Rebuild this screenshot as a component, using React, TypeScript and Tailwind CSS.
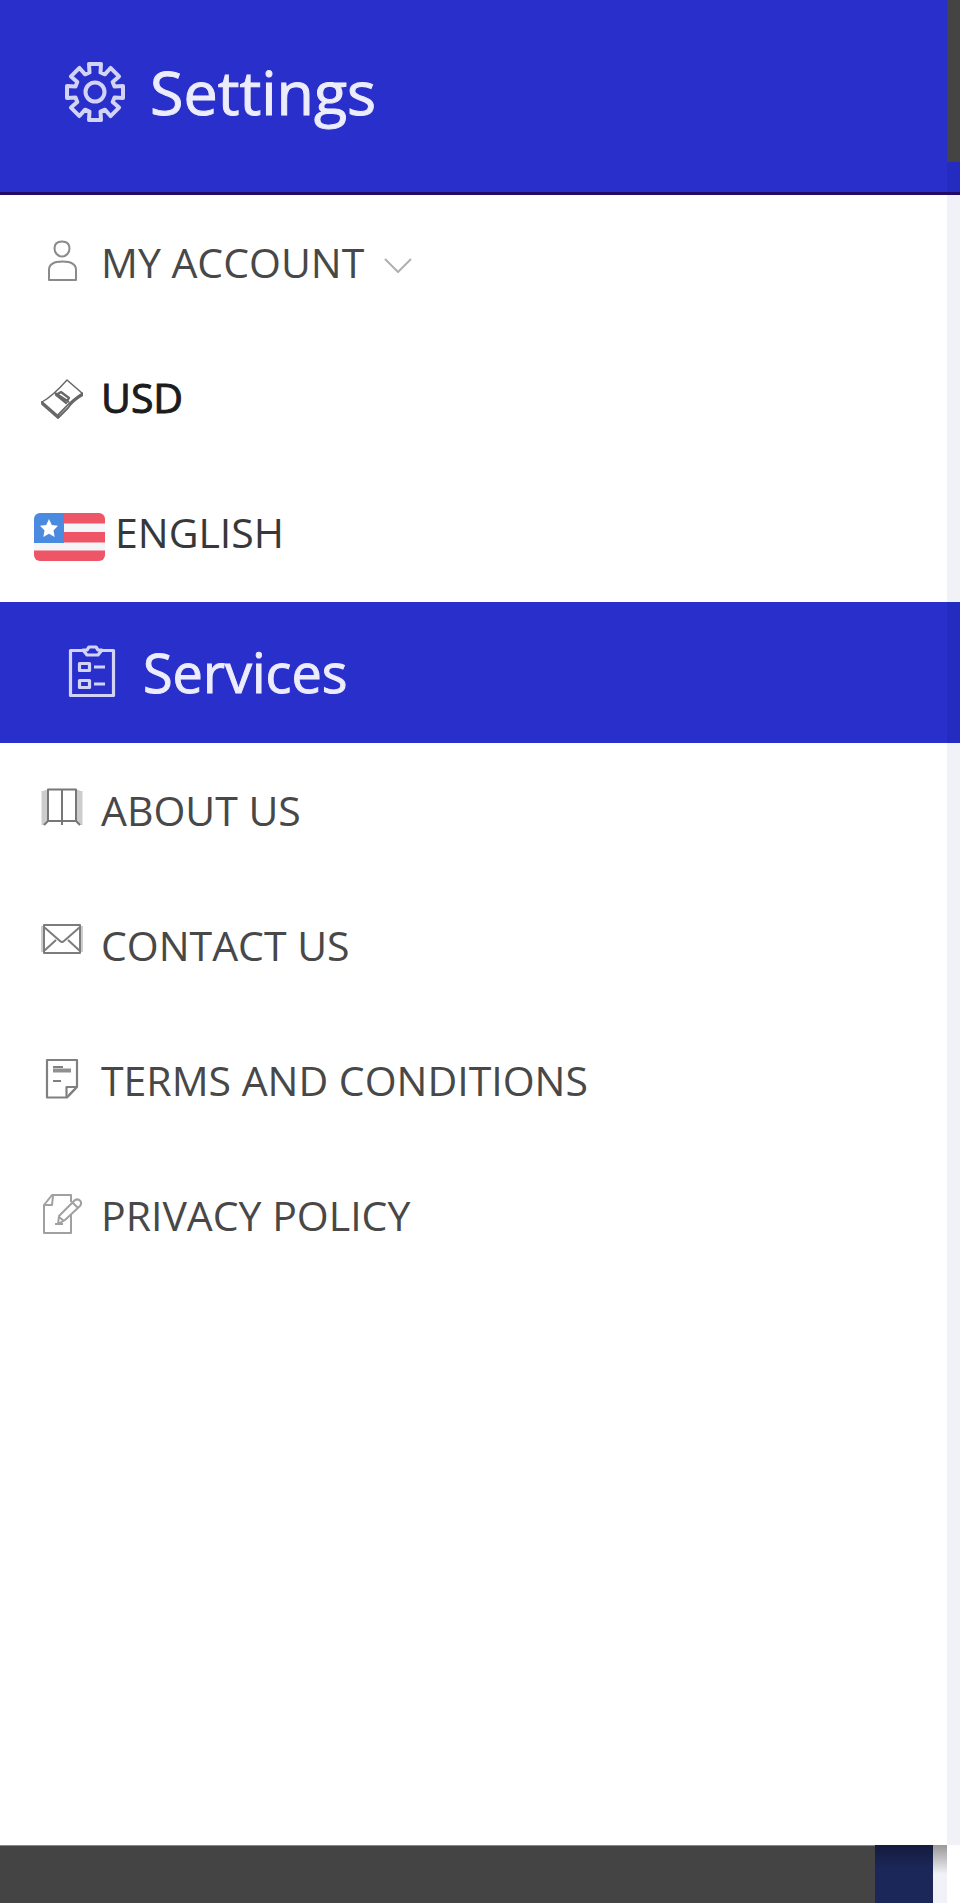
import type { ReactNode } from "react";

function Svg({ className, box, w, children }: { className: string; box: string; w: number; children: ReactNode }) {
  return (
    <svg aria-hidden="true" className={className} viewBox={box} fill="none" stroke="currentColor" strokeWidth={w} strokeLinejoin="round">
      {children}
    </svg>
  );
}

function GearIcon() {
  const pts = Array.from({ length: 8 }, (_, i) => {
    const a = (i * Math.PI) / 4;
    return [[-5.5, -19.5], [-6, -28], [6, -28], [5.5, -19.5]]
      .map(([x, y]) => `${(x * Math.cos(a) - y * Math.sin(a)).toFixed(2)},${(x * Math.sin(a) + y * Math.cos(a)).toFixed(2)}`)
      .join(" ");
  }).join(" ");
  return (
    <Svg className="size-[62px] shrink-0 text-[#d2d3f5]" box="-31 -31 62 62" w={4}>
      <polygon points={pts} />
      <circle r="9.5" />
    </Svg>
  );
}

function ClipboardIcon() {
  return (
    <Svg className="h-[54px] w-[50px] shrink-0 text-[#d2d3f5]" box="0 0 50 54" w={3.2}>
      <path d="M17 5.500H3.500V50.500H46.500V5.500H33" />
      <path d="M16 5l4 0 2-3h7l2 3 4 0-4 5H20z" />
      <path d="M12.500 18.500h10v7h-10zM12.500 35.500h10v7h-10zM27 22h11M27 39h11" />
    </Svg>
  );
}

const rowIcon = "size-[42px] shrink-0";

const UserIcon = () => (
  <Svg className={rowIcon + " text-[#8a8a8a]"} box="0 0 42 42" w={2}>
    <path d="M21 1.500c5 0 7.500 3 7.500 7s-3 8-7.500 8-7.500-4-7.500-8S16 1.500 21 1.500z" />
    <path d="M8 40V30c0-6 6-8.500 13.500-8.500S35 24 35 30v10z" />
  </Svg>
);

const MoneyIcon = () => (
  <Svg className={rowIcon + " text-[#666]"} box="0 0 42 42" w={1.8}>
    <path d="M1 25C10 20 18 12 26 3L42 17" strokeWidth="1.400" />
    <path d="M1 24v3l16 14M42 16v2C35 22 31 25 27 31L17 41v-3C23 32 31 22 42 16" />
    <path d="M1 25l16 14" />
    <path d="M14 16l14 9M15 18l5-3 8 6-3 5z" strokeWidth="2.200" />
  </Svg>
);

const BookIcon = () => (
  <Svg className={rowIcon + " text-[#777]"} box="0 0 42 42" w={2}>
    <path d="M2.500 3v34M39.500 3v34M5.500 2v32M36.500 2v32" stroke="#cdcdcd" strokeWidth="4" />
    <path d="M7 1.500h28V33H7zM21 1.500V37M7 33l-4 4M35 33l4 4" />
  </Svg>
);

const MailIcon = () => (
  <Svg className={rowIcon + " text-[#7c7c7c]"} box="0 0 42 42" w={2}>
    <path d="M2 3v26M40 3v26" stroke="#cdcdcd" strokeWidth="4" />
    <path d="M3 2h36v28H3zM3 4l16 14q2 2 4 0L39 4M3 28l12-11M39 28 27 17" />
  </Svg>
);

const NoteIcon = () => (
  <Svg className={rowIcon + " text-[#808080]"} box="0 0 42 42" w={2.2}>
    <path d="M6 2h30V29L26 39.500H6z" />
    <path d="M36 29H25.500v10.500M28 37l6-6" />
    <path d="M12 12.500h18" strokeWidth="4" stroke="#909090" />
    <path d="M12 9h10M12 23h8" />
  </Svg>
);

const EditIcon = () => (
  <Svg className={rowIcon + " text-[#a0a0a0]"} box="0 0 42 42" w={2}>
    <path d="M30 9V2H11L3 12V40H30V21" />
    <path d="M3 12h8l1-9" />
    <path d="M17 31l1-8L34 7c4-2 8 2 5 6L24 27zM31 9l6 6M18 24l5 4M14 31h8" />
  </Svg>
);

function FlagIcon() {
  return (
    <svg aria-hidden="true" className="h-[48px] w-[71px] shrink-0" viewBox="0 0 71 48">
      <clipPath id="flag"><rect width="71" height="48" rx="6" /></clipPath>
      <g clipPath="url(#flag)">
        <rect width="71" height="48" fill="#f4f5f9" />
        <path d="M30 0h41v10.500H30zM30 19h41v10.500H30zM0 37.500h71V48H0z" fill="#ee5567" />
        <path d="M0 0h30v30H0z" fill="#4b8bdf" />
        <path d="m15 6 2.800 6 6.200.8-4.500 4.600 1.200 6.600-5.700-3.200L9.300 24l1.200-6.600L6 12.800l6.200-.8z" fill="#fff" />
      </g>
    </svg>
  );
}

const item = "flex h-[135px] w-full items-center pl-[41px] text-left";
const labelText = "ml-[18px] pb-[2px]";

function Item({ icon, label }: { icon: ReactNode; label: string }) {
  return (
    <li>
      <a href="#" className={item + " text-[#484848]"}>
        <span className="pb-[4px]">{icon}</span>
        <span className={labelText}>{label}</span>
      </a>
    </li>
  );
}

export default function App() {
  return (
    <div className="bg-white font-['Open_Sans','Noto_Sans',sans-serif] text-[41px] leading-[54px]">
      <header className="flex border-b-[3px] border-[#240a68] bg-[#292fcb]">
        <div className="flex h-[192px] flex-1 items-center gap-[24px] pb-[8px] pl-[64px]">
          <GearIcon />
          <h1 className="text-[61px] leading-[80px] text-[#ececfb] [-webkit-text-stroke:1px]">Settings</h1>
        </div>
        <div className="flex w-[13px] flex-col bg-[#242bc0]">
          <div className="h-[162px] bg-[#444]" />
        </div>
      </header>

      <div className="flex">
        <ul className="h-[407px] flex-1">
          <li>
            <button type="button" className={item + " text-[#484848]"}>
              <span className="pb-[4px]"><UserIcon /></span>
              <span className={labelText}>MY ACCOUNT</span>
              <Svg className="mt-[6px] ml-[19px] h-[18px] w-[30px] text-[#b0b0b0]" box="0 0 30 18" w={2}>
                <path d="m2 2 13 13L28 2" />
              </Svg>
            </button>
          </li>
          <li>
            <button type="button" className={item + " text-[#1c1c1c] [-webkit-text-stroke:1px]"}>
              <MoneyIcon />
              <span className={labelText}>USD</span>
            </button>
          </li>
          <li>
            <button type="button" className="flex h-[135px] w-full items-center pl-[34px] text-left text-[#383838]">
              <span className="pt-[8px]"><FlagIcon /></span>
              <span className="ml-[10px] pb-[2px]">ENGLISH</span>
            </button>
          </li>
        </ul>
        <div className="w-[13px] bg-[#f1f2f7]" />
      </div>

      <section>
        <div className="flex bg-[#292fcb]">
          <div className="flex h-[141px] flex-1 items-center gap-[26px] pb-[2px] pl-[67px]">
            <ClipboardIcon />
            <h2 className="text-[54px] leading-[72px] text-[#ececfb] [-webkit-text-stroke:1px]">Services</h2>
          </div>
          <div className="w-[13px] bg-[#242bc0]" />
        </div>
        <div className="flex">
          <ul className="min-h-[1102px] flex-1">
            <Item icon={<BookIcon />} label="ABOUT US" />
            <Item icon={<MailIcon />} label="CONTACT US" />
            <Item icon={<NoteIcon />} label="TERMS AND CONDITIONS" />
            <Item icon={<EditIcon />} label="PRIVACY POLICY" />
          </ul>
          <div className="w-[13px] bg-[#f1f2f7]" />
        </div>
      </section>

      <footer className="flex h-[58px]">
        <div className="flex-1 border-t border-[#888] bg-[#444]" />
        <div className="w-[58px] bg-linear-to-b from-[#141b3d] to-[#1b2758] to-40%" />
        <div className="w-[14px] bg-linear-to-b from-[#999] to-[#f1f2f7] to-50%" />
        <div className="w-[13px] bg-white" />
      </footer>
    </div>
  );
}
